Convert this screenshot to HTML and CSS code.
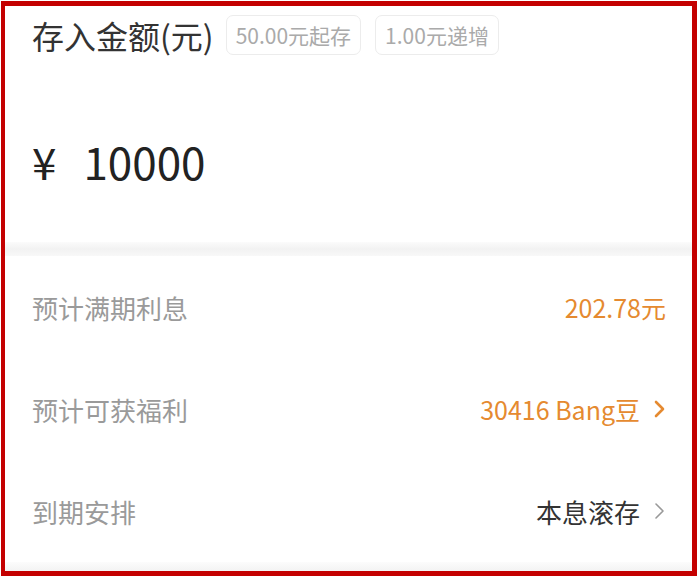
FILE: index.html
```html
<!DOCTYPE html>
<html lang="zh-CN">
<head>
<meta charset="UTF-8">
<meta name="viewport" content="width=device-width, initial-scale=1.0">
<title>存入金额</title>
<link rel="stylesheet" href="styles.css">
</head>
<body>
<div class="frame">
    <div class="deposit">
        <div class="deposit-head">
            <span class="deposit-title">存入金额(元)</span>
            <span class="tag">50.00元起存</span>
            <span class="tag">1.00元递增</span>
        </div>
        <div class="amount">
            <span class="amount-sign">¥</span>
            <span class="amount-value">10000</span>
        </div>
    </div>
    <div class="divider"></div>
    <div class="info-list">
        <div class="info-row">
            <span class="info-label">预计满期利息</span>
            <span class="info-value orange">202.78元</span>
        </div>
        <div class="info-row">
            <span class="info-label">预计可获福利</span>
            <span class="info-value orange">30416 Bang豆
                <svg class="chevron" width="12" height="20" viewBox="0 0 12 20"><polyline points="2,3 9,10 2,17" fill="none" stroke="#e58a30" stroke-width="2.6" stroke-linecap="round" stroke-linejoin="round"/></svg>
            </span>
        </div>
        <div class="info-row">
            <span class="info-label">到期安排</span>
            <span class="info-value dark">本息滚存
                <svg class="chevron" width="12" height="20" viewBox="0 0 12 20"><polyline points="2,3 9,10 2,17" fill="none" stroke="#999" stroke-width="1.6" stroke-linecap="round" stroke-linejoin="round"/></svg>
            </span>
        </div>
    </div>
    <div class="bottom-band"></div>
</div>
</body>
</html>
```

FILE: styles.css
```css
body {
    margin: 0;
    padding: 1px 2px 1px 1px;
    background-color: #fff;
    font-family: "Noto Sans CJK SC", "Noto Sans", sans-serif;
}

.frame {
    width: 696px;
    height: 575px;
    box-sizing: border-box;
    border: solid #c40000;
    border-width: 5px 5px 5px 4px;
    background-color: #fff;
    display: flex;
    flex-direction: column;
    overflow: hidden;
}

.deposit {
    padding: 9px 26px 0 27px;
    height: 227px;
}

.deposit-head {
    display: flex;
    align-items: center;
}

.deposit-title {
    font-size: 32px;
    color: #333;
    margin-right: 12px;
    line-height: 40px;
}

.tag {
    height: 40px;
    box-sizing: border-box;
    padding: 0 9px;
    border: 1px solid #ececec;
    border-radius: 7px;
    font-size: 21px;
    color: #aaa;
    display: flex;
    align-items: center;
    margin-right: 14px;
}

.amount {
    margin-top: 76px;
    display: flex;
    align-items: center;
    height: 60px;
    color: #222;
}

.amount-sign {
    font-size: 44px;
    margin-right: 27px;
}

.amount-value {
    font-size: 44px;
}

.divider {
    height: 14px;
    background: linear-gradient(#fbfbfb, #f2f2f2 50%, #f8f8f8);
}

.info-list {
    padding: 0 26px 0 27px;
}

.info-row {
    height: 102px;
    display: flex;
    align-items: center;
    justify-content: space-between;
}

.info-label {
    font-size: 26px;
    color: #9a9a9a;
}

.info-value {
    font-size: 26px;
    display: flex;
    align-items: center;
}

.orange {
    color: #e58a30;
    font-size: 25px;
}

.dark {
    color: #333;
}

.chevron {
    margin-left: 14px;
}

.bottom-band {
    flex: 1;
    background: linear-gradient(#fcfcfc, #f3f3f3);
}
```
